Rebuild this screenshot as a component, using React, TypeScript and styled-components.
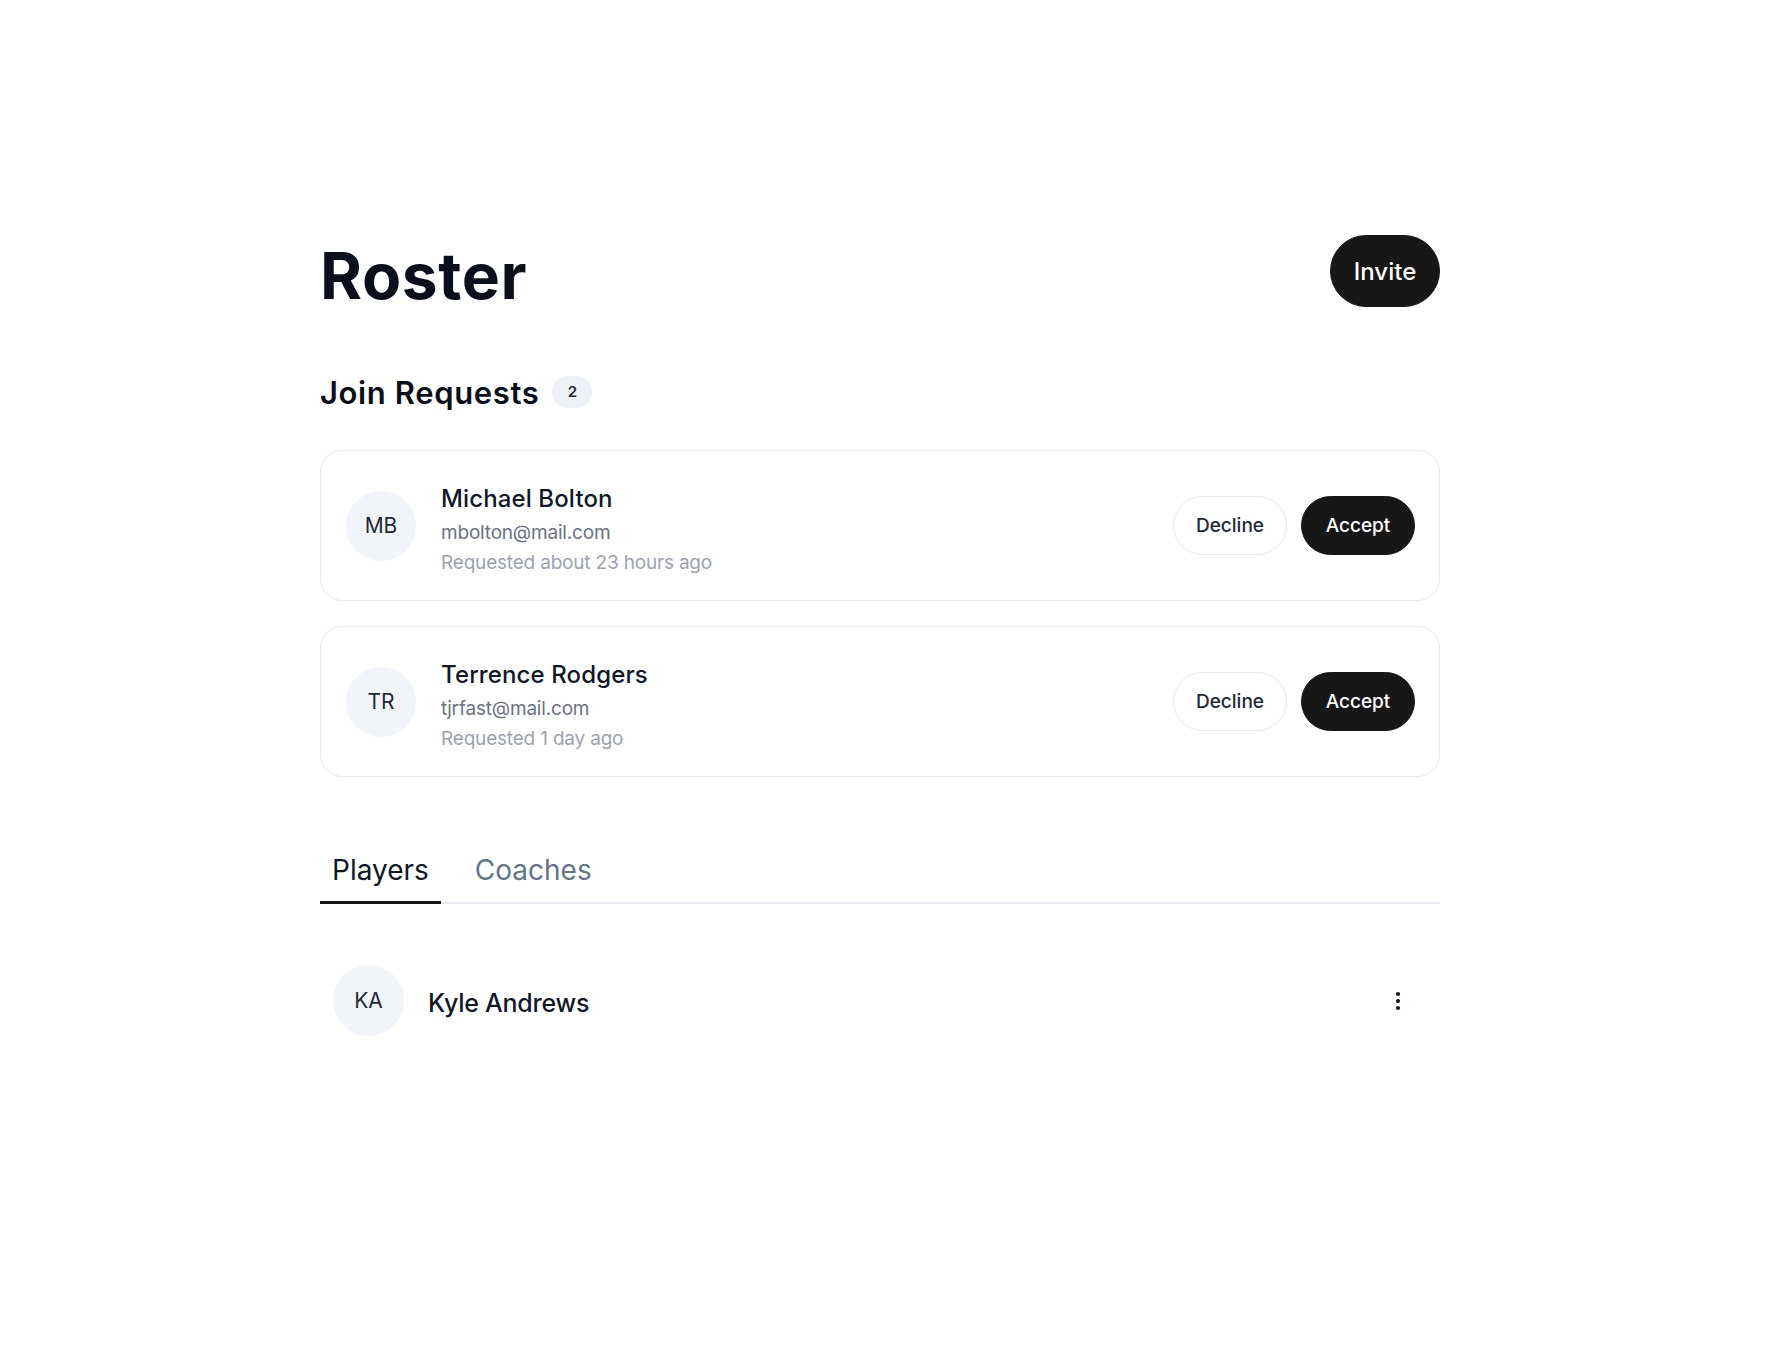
import { FC, useState } from 'react';
import styled, { createGlobalStyle } from 'styled-components';
import { EllipsisVertical } from 'lucide-react';

const GlobalStyle = createGlobalStyle`
  html, body {
    margin: 0;
    padding: 0;
    background: #ffffff;
  }
  body {
    font-family: Inter, "Noto Sans", "Liberation Sans", sans-serif;
    color: #111827;
    -webkit-font-smoothing: antialiased;
  }
  * {
    box-sizing: border-box;
  }
`;

const Page = styled.div`
  min-height: 1356px;
  padding: 235px 6px 0 0;
`;

const Container = styled.main`
  width: 1120px;
  margin: 0 auto;
`;

const Header = styled.header`
  display: flex;
  justify-content: space-between;
  align-items: flex-start;
`;

const Title = styled.h1`
  margin: 0;
  padding-top: 5px;
  font-size: 64px;
  line-height: 72px;
  font-weight: 700;
  letter-spacing: 0.01em;
  color: #0b0f19;
`;

const PillButton = styled.button<{ variant?: 'solid' | 'outline' }>`
  display: inline-flex;
  align-items: center;
  justify-content: center;
  border-radius: 9999px;
  font-family: inherit;
  font-weight: 500;
  cursor: pointer;
  border: 1.5px solid ${props => props.variant === 'outline' ? '#e2e8f0' : '#171717'};
  background: ${props => props.variant === 'outline' ? '#ffffff' : '#171717'};
  color: ${props => props.variant === 'outline' ? '#1f2937' : '#ffffff'};
`;

const InviteButton = styled(PillButton)`
  width: 110px;
  height: 72px;
  font-size: 24px;
`;

const RequestButton = styled(PillButton)`
  height: 59px;
  padding: 0 22px;
  font-size: 19px;
  min-width: 114px;
`;

const SectionTitle = styled.div`
  display: flex;
  align-items: center;
  gap: 13px;
  margin-top: 61px;
  height: 40px;
`;

const SectionName = styled.h2`
  margin: 0;
  font-size: 31px;
  line-height: 40px;
  font-weight: 600;
  letter-spacing: 0.02em;
  color: #0b0f19;
`;

const CountBadge = styled.span`
  display: inline-flex;
  align-items: center;
  justify-content: center;
  width: 40px;
  height: 32px;
  margin-top: -3px;
  border-radius: 9999px;
  background: #eef2f7;
  color: #1f2937;
  font-size: 15px;
  font-weight: 600;
`;

const RequestList = styled.div`
  display: flex;
  flex-direction: column;
  gap: 25px;
  margin-top: 37px;
`;

const RequestCard = styled.div`
  display: flex;
  align-items: center;
  height: 151px;
  padding: 0 24px 0 25px;
  border: 1.5px solid #e5e9f0;
  border-radius: 22px;
  background: #ffffff;
`;

const Avatar = styled.div<{ size: number }>`
  flex: none;
  display: flex;
  align-items: center;
  justify-content: center;
  width: ${props => props.size}px;
  height: ${props => props.size}px;
  border-radius: 50%;
  background: #f1f5f9;
  color: #1f2937;
  font-size: 21px;
  font-weight: 400;
`;

const RequestInfo = styled.div`
  flex: 1;
  display: flex;
  flex-direction: column;
  margin-left: 25px;
  padding-top: 6px;
`;

const PersonName = styled.div`
  font-size: 24px;
  line-height: 38px;
  font-weight: 500;
  letter-spacing: 0.005em;
  color: #111827;
`;

const Email = styled.div`
  font-size: 19px;
  line-height: 30px;
  color: #6b7280;
  letter-spacing: -0.01em;
`;

const RequestedAt = styled.div`
  font-size: 19px;
  line-height: 29px;
  color: #9ca3af;
  letter-spacing: -0.01em;
`;

const Actions = styled.div`
  display: flex;
  gap: 14px;
`;

const TabList = styled.div`
  display: flex;
  gap: 22px;
  margin-top: 66px;
  border-bottom: 2px solid #e8eaef;
`;

const Tab = styled.button<{ active: boolean }>`
  margin-bottom: -2px;
  padding: 9px 12px 13px;
  border: none;
  border-bottom: 3px solid ${props => props.active ? '#171717' : 'transparent'};
  background: none;
  font-family: inherit;
  font-size: 28px;
  line-height: 36px;
  font-weight: 400;
  letter-spacing: 0;
  color: ${props => props.active ? '#111827' : '#64748b'};
  cursor: pointer;
`;

const PlayerRow = styled.div`
  display: flex;
  align-items: center;
  gap: 24px;
  margin-top: 49px;
  padding: 12px 22px 12px 13px;
`;

const PlayerName = styled.div`
  flex: 1;
  padding-top: 4px;
  font-size: 25px;
  font-weight: 500;
  letter-spacing: -0.01em;
  color: #111827;
`;

const MenuButton = styled.button`
  display: flex;
  padding: 8px;
  border: none;
  background: none;
  color: #111827;
  cursor: pointer;
`;

interface JoinRequest {
  initials: string;
  name: string;
  email: string;
  requested: string;
}

const requests: JoinRequest[] = [
  { initials: 'MB', name: 'Michael Bolton', email: 'mbolton@mail.com', requested: 'Requested about 23 hours ago' },
  { initials: 'TR', name: 'Terrence Rodgers', email: 'tjrfast@mail.com', requested: 'Requested 1 day ago' },
];

const App: FC = () => {
  const [tab, setTab] = useState<'players' | 'coaches'>('players');

  return (
    <Page>
      <GlobalStyle />
      <Container>
        <Header>
          <Title>Roster</Title>
          <InviteButton>Invite</InviteButton>
        </Header>

        <SectionTitle>
          <SectionName>Join Requests</SectionName>
          <CountBadge>{requests.length}</CountBadge>
        </SectionTitle>

        <RequestList>
          {requests.map(r => (
            <RequestCard key={r.email}>
              <Avatar size={70}>{r.initials}</Avatar>
              <RequestInfo>
                <PersonName>{r.name}</PersonName>
                <Email>{r.email}</Email>
                <RequestedAt>{r.requested}</RequestedAt>
              </RequestInfo>
              <Actions>
                <RequestButton variant="outline">Decline</RequestButton>
                <RequestButton>Accept</RequestButton>
              </Actions>
            </RequestCard>
          ))}
        </RequestList>

        <TabList>
          <Tab active={tab === 'players'} onClick={() => setTab('players')}>Players</Tab>
          <Tab active={tab === 'coaches'} onClick={() => setTab('coaches')}>Coaches</Tab>
        </TabList>

        {tab === 'players' && (
          <PlayerRow>
            <Avatar size={71}>KA</Avatar>
            <PlayerName>Kyle Andrews</PlayerName>
            <MenuButton aria-label="More">
              <EllipsisVertical size={24} strokeWidth={2.2} />
            </MenuButton>
          </PlayerRow>
        )}
      </Container>
    </Page>
  );
};

export default App;
